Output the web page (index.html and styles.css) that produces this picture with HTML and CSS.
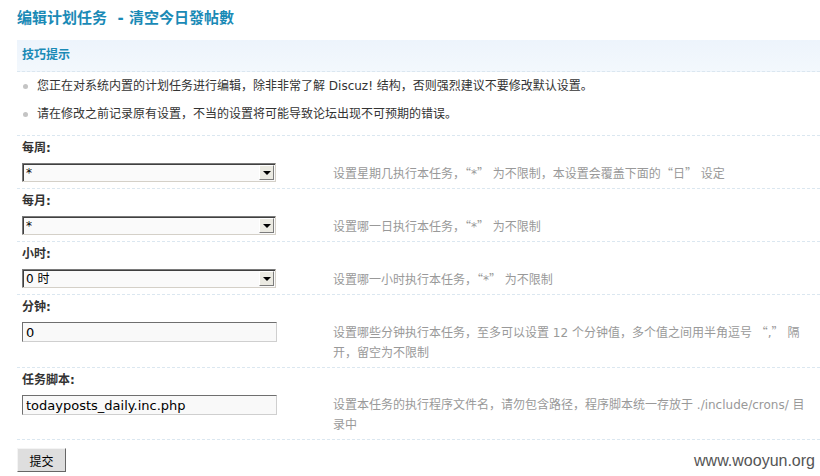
FILE: index.html
```html
<!DOCTYPE html>
<html lang="zh-CN">
<head>
  <meta charset="UTF-8" />
  <title>编辑计划任务 - 清空今日發帖數</title>
  <link rel="stylesheet" href="styles.css">
</head>
<body>
  <div class="page">
    <h3 class="title">编辑计划任务&nbsp; - 清空今日發帖數</h3>

    <div class="tips">
      <div class="tips-head">技巧提示</div>
      <ul class="tips-list">
        <li>您正在对系统内置的计划任务进行编辑，除非非常了解 Discuz! 结构，否则强烈建议不要修改默认设置。</li>
        <li>请在修改之前记录原有设置，不当的设置将可能导致论坛出现不可预期的错误。</li>
      </ul>
    </div>

    <form class="setting" onsubmit="return false">
      <div class="group">
        <div class="label">每周:</div>
        <div class="row">
          <div class="field">
            <div class="select">
              <select name="weekday">
                <option selected>*</option>
                <option>星期日</option>
                <option>星期一</option>
                <option>星期二</option>
              </select>
              <span class="select-btn"></span>
            </div>
          </div>
          <div class="desc">设置星期几执行本任务，<span class="cn">“</span>*<span class="cn">”</span> 为不限制，本设置会覆盖下面的<span class="cn">“</span>日<span class="cn">”</span> 设定</div>
        </div>
      </div>

      <div class="group">
        <div class="label">每月:</div>
        <div class="row">
          <div class="field">
            <div class="select">
              <select name="day">
                <option selected>*</option>
                <option>1 日</option>
                <option>2 日</option>
              </select>
              <span class="select-btn"></span>
            </div>
          </div>
          <div class="desc">设置哪一日执行本任务，<span class="cn">“</span>*<span class="cn">”</span> 为不限制</div>
        </div>
      </div>

      <div class="group">
        <div class="label">小时:</div>
        <div class="row">
          <div class="field">
            <div class="select">
              <select name="hour">
                <option>*</option>
                <option selected>0 时</option>
                <option>1 时</option>
              </select>
              <span class="select-btn"></span>
            </div>
          </div>
          <div class="desc">设置哪一小时执行本任务，<span class="cn">“</span>*<span class="cn">”</span> 为不限制</div>
        </div>
      </div>

      <div class="group">
        <div class="label">分钟:</div>
        <div class="row">
          <div class="field">
            <input class="text" type="text" name="minute" value="0">
          </div>
          <div class="desc">设置哪些分钟执行本任务，至多可以设置 12 个分钟值，多个值之间用半角逗号 <span class="cn">“</span>,<span class="cn">”</span> 隔开，留空为不限制</div>
        </div>
      </div>

      <div class="group">
        <div class="label">任务脚本:</div>
        <div class="row">
          <div class="field">
            <input class="text" type="text" name="filename" value="todayposts_daily.inc.php">
          </div>
          <div class="desc">设置本任务的执行程序文件名，请勿包含路径，程序脚本统一存放于 ./include/crons/ 目录中</div>
        </div>
      </div>

      <div class="submit">
        <button type="submit" class="btn">提交</button>
      </div>
    </form>
  </div>

  <div class="watermark">www.wooyun.org</div>
</body>
</html>
```

FILE: styles.css
```css
body {
  margin: 0;
  font-family: "DejaVu Sans", "Noto Sans CJK SC", sans-serif;
  font-size: 12px;
  color: #333;
  background-color: #fff;
}

.page {
  padding: 8px 0 0 17px;
}

.title {
  margin: 0;
  height: 32px;
  line-height: 20px;
  font-size: 15px;
  font-weight: bold;
  color: #1a8ab6;
}

/* tips box */
.tips-head {
  height: 31px;
  line-height: 31px;
  padding-left: 5px;
  font-weight: bold;
  color: #1a8ab6;
  background: linear-gradient(#edf4fc, #f3f8fd);
  border-bottom: 1px dashed #dbe7f0;
}

.tips-list {
  list-style: none;
  margin: 0;
  padding: 0 0 7px;
}

.tips-list li {
  position: relative;
  height: 28px;
  line-height: 28px;
  padding-left: 20px;
}

.tips-list li::before {
  content: "";
  position: absolute;
  left: 6px;
  top: 12px;
  width: 5px;
  height: 5px;
  border-radius: 50%;
  background-color: #c4c4c4;
}

/* setting rows */
.setting {
  border-top: 1px dashed #dbe7f0;
}

.group {
  border-bottom: 1px dashed #dbe7f0;
}

.label {
  padding: 3px 5px 5px;
  line-height: 18px;
  font-weight: bold;
}

.row {
  display: flex;
}

.field {
  width: 301px;
  flex: none;
  padding: 1px 5px 5px;
}

.desc {
  flex: 1;
  padding: 1px 5px 4px;
  line-height: 20px;
  color: #999;
}

/* full-width quote marks, as in the Chinese font */
.cn {
  font-family: "Noto Sans CJK SC", sans-serif;
}

.select {
  position: relative;
  width: 254px;
  height: 19px;
}

.select select {
  -webkit-appearance: none;
  appearance: none;
  box-sizing: border-box;
  width: 100%;
  height: 19px;
  margin: 0;
  padding: 0 0 0 3px;
  font-family: inherit;
  font-size: 12px;
  color: #000;
  background-color: #fafafa;
  border: 1px solid #d4d0c8;
  border-top-color: #7a7a7a;
  border-left-color: #7a7a7a;
  box-shadow: inset 1px 1px 0 #404040;
  border-radius: 0;
}

.select-btn {
  position: absolute;
  right: 2px;
  top: 2px;
  width: 15px;
  height: 15px;
  background-color: #ebeae2;
  border: 1px solid #7c7c7c;
  border-top-color: #fff;
  border-left-color: #fff;
  box-sizing: border-box;
  pointer-events: none;
}

.select-btn::after {
  content: "";
  position: absolute;
  left: 3px;
  top: 5px;
  border-left: 4px solid transparent;
  border-right: 4px solid transparent;
  border-top: 4px solid #000;
}

.text {
  box-sizing: border-box;
  display: block;
  width: 255px;
  height: 20px;
  margin: 0;
  padding: 0 3px;
  font-family: "DejaVu Sans", sans-serif;
  font-size: 13px;
  color: #000;
  background-color: #f9f9f9;
  border: 1px solid #cfcfcf;
  border-top-color: #6f6f6f;
  border-left-color: #6f6f6f;
}

.submit {
  padding-top: 8px;
}

.btn {
  width: 49px;
  height: 24px;
  padding: 0;
  font-family: "Noto Sans CJK SC", sans-serif;
  font-size: 12px;
  color: #000;
  background-color: #dedede;
  border: 1px solid #666;
  border-top-color: #f4f4f4;
  border-left-color: #f4f4f4;
  cursor: pointer;
}

.watermark {
  position: absolute;
  right: 5px;
  top: 452px;
  font-family: "Liberation Sans", sans-serif;
  font-size: 16px;
  color: #555;
  text-shadow: 0 0 2px #fff;
}
```
